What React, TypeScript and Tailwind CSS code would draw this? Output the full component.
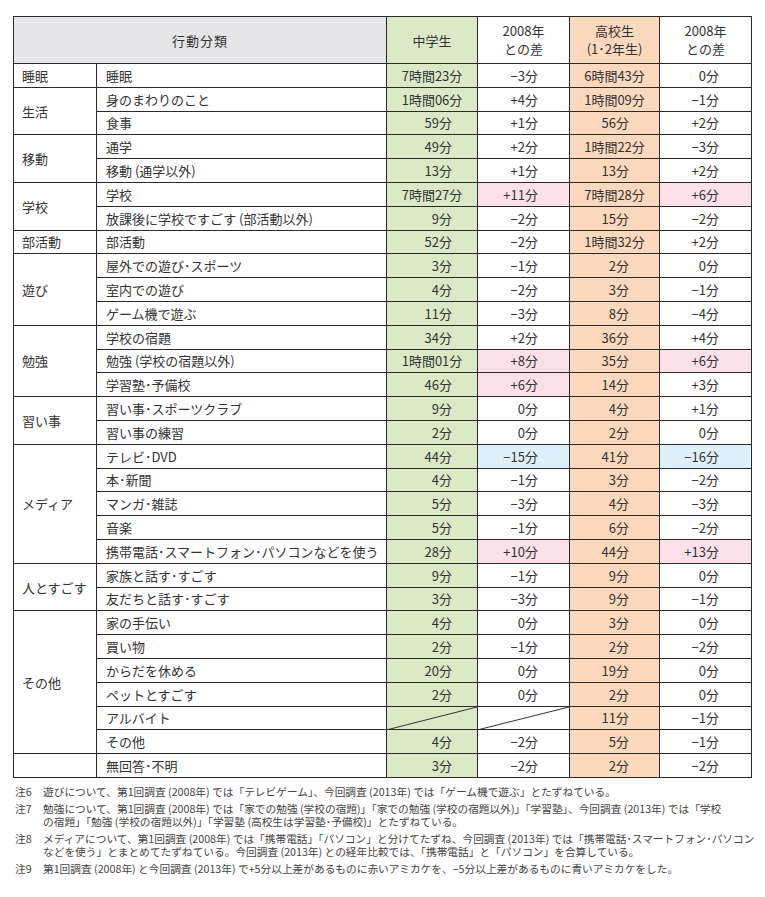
import React from "react";

type Row = {
  label: string;
  jh: string;
  d1: string;
  hs: string;
  d2: string;
  h1?: "p" | "b";
  h2?: "p" | "b";
  slash?: boolean;
};

type Group = { cat: string; rows: Row[] };

const groups: Group[] = [
  { cat: "睡眠", rows: [{ label: "睡眠", jh: "7時間23分", d1: "−3分", hs: "6時間43分", d2: "0分" }] },
  {
    cat: "生活",
    rows: [
      { label: "身のまわりのこと", jh: "1時間06分", d1: "+4分", hs: "1時間09分", d2: "−1分" },
      { label: "食事", jh: "59分", d1: "+1分", hs: "56分", d2: "+2分" },
    ],
  },
  {
    cat: "移動",
    rows: [
      { label: "通学", jh: "49分", d1: "+2分", hs: "1時間22分", d2: "−3分" },
      { label: "移動 (通学以外)", jh: "13分", d1: "+1分", hs: "13分", d2: "+2分" },
    ],
  },
  {
    cat: "学校",
    rows: [
      { label: "学校", jh: "7時間27分", d1: "+11分", hs: "7時間28分", d2: "+6分", h1: "p", h2: "p" },
      { label: "放課後に学校ですごす (部活動以外)", jh: "9分", d1: "−2分", hs: "15分", d2: "−2分" },
    ],
  },
  { cat: "部活動", rows: [{ label: "部活動", jh: "52分", d1: "−2分", hs: "1時間32分", d2: "+2分" }] },
  {
    cat: "遊び",
    rows: [
      { label: "屋外での遊び･スポーツ", jh: "3分", d1: "−1分", hs: "2分", d2: "0分" },
      { label: "室内での遊び", jh: "4分", d1: "−2分", hs: "3分", d2: "−1分" },
      { label: "ゲーム機で遊ぶ", jh: "11分", d1: "−3分", hs: "8分", d2: "−4分" },
    ],
  },
  {
    cat: "勉強",
    rows: [
      { label: "学校の宿題", jh: "34分", d1: "+2分", hs: "36分", d2: "+4分" },
      { label: "勉強 (学校の宿題以外)", jh: "1時間01分", d1: "+8分", hs: "35分", d2: "+6分", h1: "p", h2: "p" },
      { label: "学習塾･予備校", jh: "46分", d1: "+6分", hs: "14分", d2: "+3分", h1: "p" },
    ],
  },
  {
    cat: "習い事",
    rows: [
      { label: "習い事･スポーツクラブ", jh: "9分", d1: "0分", hs: "4分", d2: "+1分" },
      { label: "習い事の練習", jh: "2分", d1: "0分", hs: "2分", d2: "0分" },
    ],
  },
  {
    cat: "メディア",
    rows: [
      { label: "テレビ･DVD", jh: "44分", d1: "−15分", hs: "41分", d2: "−16分", h1: "b", h2: "b" },
      { label: "本･新聞", jh: "4分", d1: "−1分", hs: "3分", d2: "−2分" },
      { label: "マンガ･雑誌", jh: "5分", d1: "−3分", hs: "4分", d2: "−3分" },
      { label: "音楽", jh: "5分", d1: "−1分", hs: "6分", d2: "−2分" },
      { label: "携帯電話･スマートフォン･パソコンなどを使う", jh: "28分", d1: "+10分", hs: "44分", d2: "+13分", h1: "p", h2: "p" },
    ],
  },
  {
    cat: "人とすごす",
    rows: [
      { label: "家族と話す･すごす", jh: "9分", d1: "−1分", hs: "9分", d2: "0分" },
      { label: "友だちと話す･すごす", jh: "3分", d1: "−3分", hs: "9分", d2: "−1分" },
    ],
  },
  {
    cat: "その他",
    rows: [
      { label: "家の手伝い", jh: "4分", d1: "0分", hs: "3分", d2: "0分" },
      { label: "買い物", jh: "2分", d1: "−1分", hs: "2分", d2: "−2分" },
      { label: "からだを休める", jh: "20分", d1: "0分", hs: "19分", d2: "0分" },
      { label: "ペットとすごす", jh: "2分", d1: "0分", hs: "2分", d2: "0分" },
      { label: "アルバイト", jh: "", d1: "", hs: "11分", d2: "−1分", slash: true },
      { label: "その他", jh: "4分", d1: "−2分", hs: "5分", d2: "−1分" },
    ],
  },
  { cat: "", rows: [{ label: "無回答･不明", jh: "3分", d1: "−2分", hs: "2分", d2: "−2分" }] },
];

const bd = "border border-[#2a2a2a]";

function Slash() {
  return (
    <svg className="absolute inset-0 h-full w-full" viewBox="0 0 100 100" preserveAspectRatio="none">
      <line x1="0" y1="100" x2="100" y2="0" stroke="#333" strokeWidth="1" vectorEffect="non-scaling-stroke" />
    </svg>
  );
}

// short values line up on the right edge, "X時間YY分" values are centred
function Val({ v, pr }: { v: string; pr: string }) {
  if (v.includes("時間")) return <span>{v}</span>;
  return <div className={`text-right ${pr}`}>{v}</div>;
}

function hl(h?: "p" | "b") {
  if (h === "p") return "bg-[#fce0ea]";
  if (h === "b") return "bg-[#def0fa]";
  return "bg-white";
}

const notes: { n: string; lines: string[] }[] = [
  { n: "注6", lines: ["遊びについて、第1回調査 (2008年) では「テレビゲーム」、今回調査 (2013年) では「ゲーム機で遊ぶ」とたずねている。"] },
  {
    n: "注7",
    lines: [
      "勉強について、第1回調査 (2008年) では「家での勉強 (学校の宿題)」「家での勉強 (学校の宿題以外)」「学習塾」、今回調査 (2013年) では「学校",
      "の宿題」「勉強 (学校の宿題以外)」「学習塾 (高校生は学習塾･予備校)」とたずねている。",
    ],
  },
  {
    n: "注8",
    lines: [
      "メディアについて、第1回調査 (2008年) では「携帯電話」「パソコン」と分けてたずね、今回調査 (2013年) では「携帯電話･スマートフォン･パソコン",
      "などを使う」とまとめてたずねている。今回調査 (2013年) との経年比較では、「携帯電話」と「パソコン」を合算している。",
    ],
  },
  { n: "注9", lines: ["第1回調査 (2008年) と今回調査 (2013年) で+5分以上差があるものに赤いアミカケを、−5分以上差があるものに青いアミカケをした。"] },
];

export default function App() {
  return (
    <div
      className="min-h-[897px] w-[765px] bg-white pl-[13px] pt-[16px] text-[#333]"
      style={{ fontFamily: '"Noto Sans CJK JP", "Noto Sans", sans-serif' }}
    >
      <table className="w-[738px] table-fixed border-collapse text-[13px] leading-none">
        <colgroup>
          <col className="w-[83px]" />
          <col className="w-[290px]" />
          <col className="w-[91px]" />
          <col className="w-[92px]" />
          <col className="w-[90px]" />
          <col className="w-[92px]" />
        </colgroup>
        <thead>
          <tr className="h-[47px]">
            <th colSpan={2} className={`${bd} bg-[#e6e6e8] font-normal tracking-[1px]`}>行動分類</th>
            <th className={`${bd} bg-[#dbe9c6] font-normal`}>中学生</th>
            <th className={`${bd} bg-white font-normal leading-[18px]`}>
              2008年
              <br />
              との差
            </th>
            <th className={`${bd} bg-[#fcd8be] font-normal leading-[18px]`}>
              高校生
              <br />
              (1･2年生)
            </th>
            <th className={`${bd} bg-white font-normal leading-[18px]`}>
              2008年
              <br />
              との差
            </th>
          </tr>
        </thead>
        <tbody>
          {groups.map((g) =>
            g.rows.map((r, i) => (
              <tr key={g.cat + r.label} className="h-[23.8px]">
                {i === 0 && (
                  <td rowSpan={g.rows.length} className={`${bd} pl-[8px] align-middle`}>
                    {g.cat}
                  </td>
                )}
                <td className={`${bd} whitespace-nowrap pl-[9px]`}>{r.label}</td>
                <td className={`${bd} relative bg-[#dbe9c6] text-center`}>
                  {r.slash ? <Slash /> : <Val v={r.jh} pr="pr-[25px]" />}
                </td>
                <td className={`${bd} relative text-center ${hl(r.h1)}`}>
                  {r.slash ? <Slash /> : <Val v={r.d1} pr="pr-[31px]" />}
                </td>
                <td className={`${bd} bg-[#fcd8be] text-center`}>
                  <Val v={r.hs} pr="pr-[30px]" />
                </td>
                <td className={`${bd} text-center ${hl(r.h2)}`}>
                  <Val v={r.d2} pr="pr-[32px]" />
                </td>
              </tr>
            ))
          )}
        </tbody>
      </table>

      <div className="mt-[7px] flex flex-col gap-[4px] text-[10.7px] leading-[13px] text-[#444]">
        {notes.map((n) => (
          <div key={n.n} className="flex">
            <div className="w-[30px] shrink-0 pl-[2px]">{n.n}</div>
            <div className="whitespace-nowrap">
              {n.lines.map((l, k) => (
                <div key={k}>{l}</div>
              ))}
            </div>
          </div>
        ))}
      </div>
    </div>
  );
}
